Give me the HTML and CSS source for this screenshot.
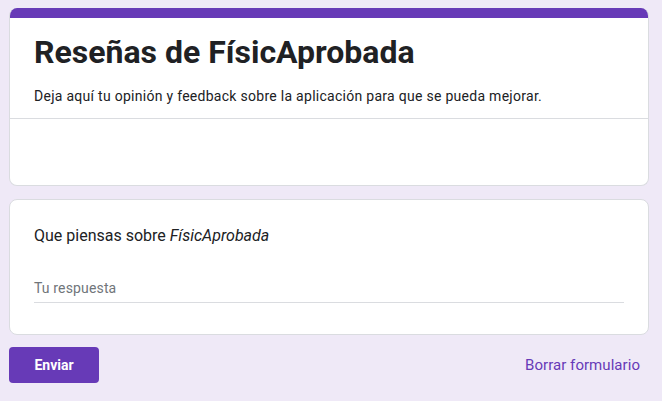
FILE: index.html
```html
<!DOCTYPE html>
<html lang="es">
<head>
<meta charset="utf-8">
<title>Reseñas de FísicAprobada</title>
<link rel="stylesheet" href="styles.css">
</head>
<body>
<div class="page">
  <div class="card header-card">
    <div class="accent"></div>
    <div class="header-body">
      <h1 class="title">Reseñas de FísicAprobada</h1>
      <p class="desc">Deja aquí tu opinión y feedback sobre la aplicación para que se pueda mejorar.</p>
    </div>
    <div class="header-blank"></div>
  </div>
  <div class="card question-card">
    <div class="question">Que piensas sobre <em>FísicAprobada</em></div>
    <div class="answer"><span class="placeholder">Tu respuesta</span></div>
  </div>
  <div class="actions">
    <button class="submit">Enviar</button>
    <span class="clear">Borrar formulario</span>
  </div>
</div>
</body>
</html>
```
FILE: styles.css
```css
html, body {
  margin: 0;
  padding: 0;
  background: #efe9f7;
  font-family: Roboto, "Noto Sans", Arial, sans-serif;
  color: #202124;
}
.page {
  width: 640px;
  padding: 8px 0 0 9px;
  display: flex;
  flex-direction: column;
}
.card {
  background: #fff;
  border: 1px solid #dadce0;
  border-radius: 8px;
  box-sizing: border-box;
}
.header-card {
  border-top: none;
  overflow: hidden;
}
.accent {
  height: 10px;
  background: #673ab7;
}
.header-body {
  padding: 14px 24px 12px 24px;
  border-bottom: 1px solid #dadce0;
}
.title {
  margin: 0;
  font-size: 32px;
  line-height: 40px;
  font-weight: 700;
  color: #202124;
}
.desc {
  margin: 14px 0 0 0;
  font-size: 14px;
  line-height: 20px;
  letter-spacing: 0.28px;
  color: #202124;
}
.header-blank {
  height: 66px;
}
.question-card {
  margin-top: 13px;
  padding: 24px 24px 31px 24px;
}
.question {
  font-size: 16px;
  line-height: 24px;
  color: #202124;
}
.question em {
  font-style: italic;
}
.answer {
  margin-top: 30px;
  padding-bottom: 4px;
  border-bottom: 1px solid #dadce0;
  font-size: 14px;
  line-height: 20px;
  letter-spacing: 0.15px;
}
.placeholder {
  color: #70757a;
}
.actions {
  margin-top: 12px;
  display: flex;
  justify-content: space-between;
  align-items: center;
}
.submit {
  width: 90px;
  height: 36px;
  border: none;
  border-radius: 4px;
  background: #673ab7;
  color: #fff;
  font-family: Roboto, "Noto Sans", Arial, sans-serif;
  font-size: 14px;
  font-weight: 700;
  padding: 0;
}
.clear {
  color: #673ab7;
  font-size: 15px;
  font-weight: 400;
  letter-spacing: 0.05px;
  padding-right: 9px;
}
```
